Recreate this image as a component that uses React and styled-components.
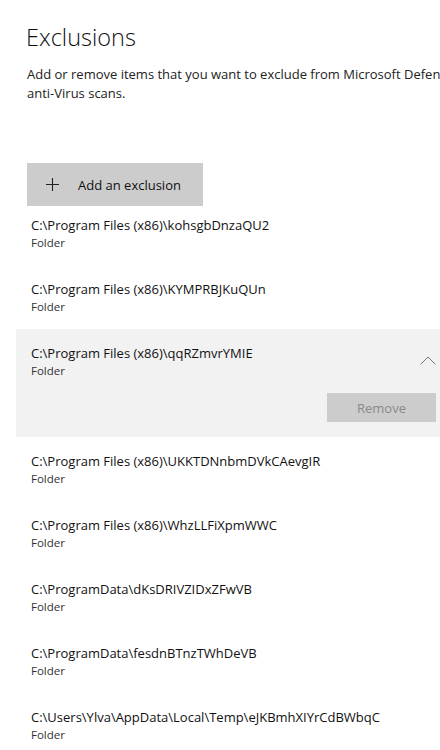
import React from "react";
import styled, { createGlobalStyle } from "styled-components";

const GlobalStyle = createGlobalStyle`
  html, body {
    margin: 0;
    padding: 0;
    background: #ffffff;
    overflow: hidden;
  }
  body {
    font-family: "Segoe UI", "Open Sans", "Noto Sans", sans-serif;
    color: #000;
  }
`;

const exclusions = [
  "C:\\Program Files (x86)\\kohsgbDnzaQU2",
  "C:\\Program Files (x86)\\KYMPRBJKuQUn",
  "C:\\Program Files (x86)\\qqRZmvrYMIE",
  "C:\\Program Files (x86)\\UKKTDNnbmDVkCAevgIR",
  "C:\\Program Files (x86)\\WhzLLFiXpmWWC",
  "C:\\ProgramData\\dKsDRIVZIDxZFwVB",
  "C:\\ProgramData\\fesdnBTnzTWhDeVB",
  "C:\\Users\\Ylva\\AppData\\Local\\Temp\\eJKBmhXIYrCdBWbqC",
];

class App extends React.Component {
  render() {
    return (
      <Page>
        <GlobalStyle />
        <Title>Exclusions</Title>
        <Description>
          Add or remove items that you want to exclude from Microsoft Defender
          <br />
          anti-Virus scans.
        </Description>
        <AddButton>
          <svg width="13" height="13" viewBox="0 0 13 13">
            <path d="M6.5 0 V13 M0 6.5 H13" stroke="#222" strokeWidth="1.1" fill="none" />
          </svg>
          <span>Add an exclusion</span>
        </AddButton>
        <List>
          {exclusions.map((path, i) => {
            const open = i === 2;
            return (
              <Row key={path} open={open}>
                <RowHead>
                  <div>
                    <Path>{path}</Path>
                    <Kind>Folder</Kind>
                  </div>
                  {open && (
                    <Chevron width="16" height="9" viewBox="0 0 16 9">
                      <path d="M0.5 8.5 L8 1 L15.5 8.5" stroke="#777" strokeWidth="1" fill="none" />
                    </Chevron>
                  )}
                </RowHead>
                {open && (
                  <Actions>
                    <RemoveButton>Remove</RemoveButton>
                  </Actions>
                )}
              </Row>
            );
          })}
        </List>
      </Page>
    );
  }
}

const Page = styled.div`
  width: 440px;
  height: 750px;
  overflow: hidden;
  padding-top: 21px;
  box-sizing: border-box;
`;

const Title = styled.h1`
  margin: 0 0 0 26px;
  font-size: 23.5px;
  font-weight: 300;
  line-height: 32px;
  color: #111;
`;

const Description = styled.p`
  margin: 12px 0 0 27px;
  font-size: 13px;
  line-height: 19px;
  color: #222;
  white-space: nowrap;
`;

const AddButton = styled.div`
  margin: 60px 0 0 27px;
  width: 176px;
  height: 43px;
  background: #cccccc;
  display: flex;
  align-items: center;
  gap: 19px;
  padding-left: 19px;
  box-sizing: border-box;
  font-size: 13px;
  color: #111;
`;

const List = styled.div`
  margin-top: -5px;
  display: flex;
  flex-direction: column;
`;

const Row = styled.div`
  height: ${(p) => (p.open ? "108px" : "64px")};
  padding: 15px 4px 0 15px;
  margin-left: 16px;
  box-sizing: border-box;
  background: ${(p) => (p.open ? "#f2f2f2" : "transparent")};
`;

const RowHead = styled.div`
  display: flex;
  justify-content: space-between;
  align-items: flex-start;
`;

const Path = styled.div`
  font-size: 13px;
  line-height: 19px;
  color: #111;
  white-space: nowrap;
`;

const Kind = styled.div`
  font-size: 11.5px;
  line-height: 16px;
  color: #333;
`;

const Chevron = styled.svg`
  margin-top: 12px;
`;

const Actions = styled.div`
  display: flex;
  justify-content: flex-end;
  margin-top: 14px;
`;

const RemoveButton = styled.div`
  width: 109px;
  height: 29px;
  background: #cccccc;
  color: #8a8a8a;
  font-size: 13px;
  display: flex;
  align-items: center;
  justify-content: center;
`;

export default App;
